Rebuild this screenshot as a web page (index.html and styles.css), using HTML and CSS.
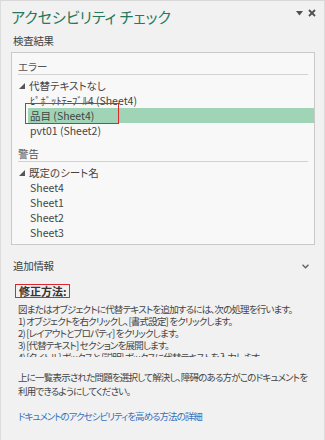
FILE: index.html
```html
<!DOCTYPE html>
<html lang="ja">
<head>
<meta charset="utf-8">
<link rel="stylesheet" href="styles.css">
</head>
<body>
<div class="panel">
  <div class="header">
    <div class="title">アクセシビリティ チェック</div>
    <div class="controls">
      <svg class="ico-down" width="7" height="5" viewBox="0 0 7 5"><path d="M0 0H7L3.5 4.5Z" fill="#505050"/></svg>
      <svg class="ico-close" width="8" height="8" viewBox="0 0 8 8"><path d="M1 1L7 7M7 1L1 7" stroke="#505050" stroke-width="1.8"/></svg>
    </div>
  </div>
  <div class="label">検査結果</div>
  <div class="results">
    <div class="group">エラー</div>
    <div class="parent"><svg class="tri" width="6" height="6" viewBox="0 0 6 6"><path d="M6 0V6H0Z" fill="#555"/></svg>代替テキストなし</div>
    <div class="child">ﾋﾟﾎﾞｯﾄﾃｰﾌﾞﾙ4 (Sheet4)</div>
    <div class="child selected"><span class="mark">品目 (Sheet4)</span></div>
    <div class="child">pvt01 (Sheet2)</div>
    <div class="group second">警告</div>
    <div class="parent"><svg class="tri" width="6" height="6" viewBox="0 0 6 6"><path d="M6 0V6H0Z" fill="#555"/></svg>既定のシート名</div>
    <div class="child">Sheet4</div>
    <div class="child">Sheet1</div>
    <div class="child">Sheet2</div>
    <div class="child">Sheet3</div>
  </div>
  <div class="info-head">
    <span>追加情報</span>
    <svg class="chev" width="7" height="5" viewBox="0 0 7 5"><path d="M0.5 0.8L3.5 3.8L6.5 0.8" fill="none" stroke="#666" stroke-width="1.5"/></svg>
  </div>
  <div class="howto"><span class="howto-title">修正方法:</span></div>
  <div class="steps">
    <div>図またはオブジェクトに代替テキストを追加するには、次の処理を行います。</div>
    <div>1) オブジェクトを右クリックし、[書式設定] をクリックします。</div>
    <div>2) [レイアウトとプロパティ] をクリックします。</div>
    <div>3) [代替テキスト] セクションを展開します。</div>
    <div>4) [タイトル] ボックスと [説明] ボックスに代替テキストを入力します。</div>
  </div>
  <p class="note">上に一覧表示された問題を選択して解決し、障碍のある方がこのドキュメントを<br>利用できるようにしてください。</p>
  <a class="link" href="#">ドキュメントのアクセシビリティを高める方法の詳細</a>
</div>
</body>
</html>
```
FILE: styles.css
```css
html, body {
  margin: 0;
  padding: 0;
  background: #f1f1f1;
}
body {
  font-family: "Noto Sans CJK JP", "Noto Sans", sans-serif;
  font-feature-settings: "palt";
  color: #444;
  font-size: 10.5px;
}
.panel {
  width: 325px;
  height: 440px;
  box-sizing: border-box;
  border-left: 1px solid #dcdcdc;
  border-right: 1px solid #dcdcdc;
  border-top: 1px solid #d8d8d8;
  padding: 4px 10px 0 10px;
  overflow: hidden;
}
.header {
  display: flex;
  align-items: center;
  justify-content: space-between;
  height: 24px;
}
.title {
  font-size: 15px;
  line-height: 24px;
  color: #24785c;
  letter-spacing: 0;
}
.controls {
  display: flex;
  align-items: center;
  gap: 5px;
  margin-right: -2px;
  margin-top: -8px;
}
.label {
  margin-top: 5px;
  line-height: 14px;
  font-size: 10.5px;
  letter-spacing: -0.3px;
  color: #404040;
  padding-left: 2px;
}
.results {
  margin-top: 4px;
  height: 193px;
  box-sizing: border-box;
  background: #f8f8f8;
  border: 1px solid #c9c9c9;
  margin-right: -1px;
  padding: 6px 6px 0 6px;
}
.group {
  line-height: 15px;
  color: #555;
  border-bottom: 1px solid #d2d2d2;
  margin-bottom: 3px;
}
.group.second {
  margin-top: 8px;
}
.parent {
  line-height: 15px;
  display: flex;
  align-items: center;
  color: #444;
}
.tri {
  margin-left: 1px;
  margin-right: 4px;
}
.child {
  line-height: 15px;
  margin-left: 10px;
  margin-right: -6px;
  padding-left: 2px;
  color: #444;
}
.child.selected {
  background: #9fd5b6;
}
.mark {
  display: inline-block;
  position: relative;
}
.mark::before {
  content: "";
  position: absolute;
  left: -5px;
  top: -5px;
  width: 92px;
  height: 19px;
  border: 1px solid #e0262a;
}
.info-head {
  margin-top: 14px;
  display: flex;
  align-items: center;
  justify-content: space-between;
  line-height: 14px;
  padding-left: 2px;
  font-size: 10.5px;
  letter-spacing: -0.3px;
  color: #404040;
}
.chev {
  margin-right: 5px;
}
.howto {
  margin-top: 11px;
  padding-left: 4px;
}
.howto-title {
  display: inline-block;
  border: 1px solid #e0262a;
  padding: 0 2px 0 3px;
  line-height: 12px;
  font-size: 11px;
  font-weight: bold;
  color: #333;
}
.steps {
  margin-top: 4px;
  padding-left: 7px;
  height: 54px;
  overflow: hidden;
  line-height: 12px;
  font-size: 9.5px;
  letter-spacing: -0.8px;
  white-space: nowrap;
  color: #444;
}
.note {
  margin: 13px 0 0 0;
  padding-left: 7px;
  line-height: 14px;
  font-size: 9.5px;
  letter-spacing: -0.8px;
  white-space: nowrap;
  color: #444;
}
.link {
  display: block;
  margin-top: 11px;
  padding-left: 7px;
  font-size: 9.5px;
  letter-spacing: -1px;
  line-height: 14px;
  color: #3572bd;
  text-decoration: none;
}
```
